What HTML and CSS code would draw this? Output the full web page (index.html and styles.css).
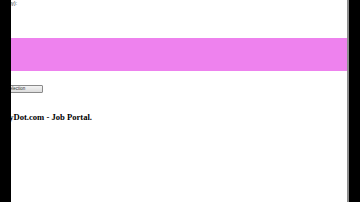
FILE: index.html
```html
<!DOCTYPE html>
<html lang="en">
<head>
    <meta charset="UTF-8">
    <title>Job Portal</title>
    <link rel="stylesheet" href="styles.css">
</head>
<body>
<div class="screen">
    <div class="bar_left"></div>
    <div class="page">
        <div class="top_line">(Company):</div>
        <div class="band"></div>
        <div class="btn_row">
            <button class="btn">Selection</button>
        </div>
        <h1 class="title">StudyDot.com - Job Portal.</h1>
    </div>
    <div class="edge"></div>
    <div class="bar_right"></div>
</div>
</body>
</html>
```
FILE: styles.css
```css
*{
    margin: 0;
    padding: 0;
}
body{
    background: #000;
}
.screen{
    width: 360px;
    height: 202px;
    display: flex;
    overflow: hidden;
}
.bar_left{
    width: 11px;
    background: #000;
}
.page{
    width: 336px;
    background: #fff;
    overflow: hidden;
    font-family: "Liberation Serif", serif;
    color: #000;
}
.top_line{
    font-family: "Liberation Sans", sans-serif;
    font-size: 5px;
    line-height: 6px;
    text-indent: -20px;
    white-space: nowrap;
    color: #333;
}
.band{
    height: 33px;
    margin-top: 32px;
    background: #ee82ee;
}
.btn_row{
    padding-top: 14px;
}
.btn{
    display: block;
    width: 48px;
    height: 8px;
    margin-left: -16px;
    padding-right: 6px;
    font-family: "Liberation Sans", sans-serif;
    font-size: 4.5px;
    line-height: 6px;
    text-align: center;
    color: #333;
    background: linear-gradient(#f4f4f4, #dcdcdc);
    border: 1px solid #8a8a8a;
    border-radius: 1px;
}
.title{
    margin-top: 19px;
    font-size: 8.6px;
    font-weight: bold;
    line-height: 10px;
    text-indent: -19px;
    white-space: nowrap;
}
.edge{
    width: 2px;
    background: #8c8c8c;
}
.bar_right{
    flex: 1;
    background: #000;
}
```
